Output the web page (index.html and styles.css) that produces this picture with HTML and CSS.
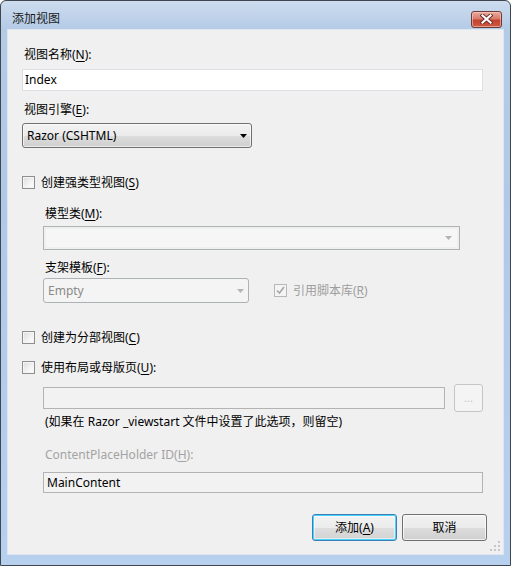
FILE: index.html
```html
<!DOCTYPE html>
<html lang="zh-CN">
<head>
<meta charset="utf-8">
<title>添加视图</title>
<link rel="stylesheet" href="styles.css">
</head>
<body>
<div class="window">
  <div class="titlebar">
    <span class="title">添加视图</span>
    <div class="close-btn">
      <svg width="13" height="10" viewBox="0 0 13 10">
        <path d="M2.5 1.5 L10.5 8.5 M10.5 1.5 L2.5 8.5" stroke="#6b2a22" stroke-width="4" stroke-linecap="square" fill="none"/>
        <path d="M2.5 1.5 L10.5 8.5 M10.5 1.5 L2.5 8.5" stroke="#ffffff" stroke-width="2.2" stroke-linecap="square" fill="none"/>
      </svg>
    </div>
  </div>
  <div class="client">
    <div class="label lbl-name">视图名称(<u>N</u>):</div>
    <div class="textbox tb-name">Index</div>

    <div class="label lbl-engine">视图引擎(<u>E</u>):</div>
    <div class="dropdown dd-engine">
      <span>Razor (CSHTML)</span>
      <svg class="arrow" width="7" height="4" viewBox="0 0 7 4"><path d="M0 0 H7 L3.5 4 Z" fill="#000"/></svg>
    </div>

    <div class="check chk-typed"><span class="box"></span><span>创建强类型视图(<u>S</u>)</span></div>

    <div class="indent">
      <div class="label lbl-model">模型类(<u>M</u>):</div>
      <div class="combo-disabled">
        <span class="combo-text"></span>
        <span class="combo-btn"><svg width="7" height="4" viewBox="0 0 7 4"><path d="M0 0 H7 L3.5 4 Z" fill="#b4b4b4"/></svg></span>
      </div>

      <div class="label lbl-scaffold">支架模板(<u>F</u>):</div>
      <div class="scaffold-row">
        <div class="dropdown dd-empty disabled">
          <span>Empty</span>
          <svg class="arrow" width="7" height="4" viewBox="0 0 7 4"><path d="M0 0 H7 L3.5 4 Z" fill="#b4b4b4"/></svg>
        </div>
        <div class="check disabled">
          <span class="box checked">
            <svg width="9" height="9" viewBox="0 0 9 9"><path d="M1 4.5 L3.5 7 L8 1" stroke="#a6a6a6" stroke-width="1.6" fill="none"/></svg>
          </span>
          <span>引用脚本库(<u>R</u>)</span>
        </div>
      </div>
    </div>

    <div class="check chk-partial"><span class="box"></span><span>创建为分部视图(<u>C</u>)</span></div>
    <div class="check chk-layout"><span class="box"></span><span>使用布局或母版页(<u>U</u>):</span></div>

    <div class="indent">
      <div class="layout-row">
        <div class="textbox tb-layout disabled"></div>
        <div class="browse-btn">...</div>
      </div>
      <div class="label note">(如果在 Razor _viewstart 文件中设置了此选项，则留空)</div>
      <div class="label lbl-cph disabled-text">ContentPlaceHolder ID(<u>H</u>):</div>
      <div class="textbox tb-cph disabled">MainContent</div>
    </div>

    <div class="buttons">
      <div class="btn btn-default">添加(<u>A</u>)</div>
      <div class="btn">取消</div>
    </div>

    <svg class="grip" width="11" height="11" viewBox="0 0 11 11">
      <rect x="8" y="0" width="2" height="2" fill="#c3c7cc"/>
      <rect x="4" y="4" width="2" height="2" fill="#c3c7cc"/>
      <rect x="8" y="4" width="2" height="2" fill="#c3c7cc"/>
      <rect x="0" y="8" width="2" height="2" fill="#c3c7cc"/>
      <rect x="4" y="8" width="2" height="2" fill="#c3c7cc"/>
      <rect x="8" y="8" width="2" height="2" fill="#c3c7cc"/>
    </svg>
  </div>
</div>
</body>
</html>
```
FILE: styles.css
```css
* { box-sizing: border-box; }
html, body { margin: 0; padding: 0; }
body {
  width: 511px;
  height: 566px;
  overflow: hidden;
  background: #ffffff;
  font-family: "Noto Sans", "Noto Sans CJK SC", sans-serif;
  font-size: 12px;
  color: #000;
}
u { text-decoration: underline; text-underline-offset: 2px; }

.window {
  width: 511px;
  height: 566px;
  border: 1px solid #3e4650;
  border-radius: 6px 6px 0 0;
  background: linear-gradient(to bottom, #cddcee 0px, #b4cbe6 28px, #b0c9e6 200px, #b6d0ee 566px);
  display: flex;
  flex-direction: column;
  padding: 0 6px 10px 6px;
}

.titlebar {
  height: 28px;
  flex: none;
  display: flex;
  align-items: center;
  justify-content: space-between;
  padding: 8px 2px 0 5px;
}
.title {
  font-size: 12px;
  color: #1a1a1a;
  line-height: 16px;
}
.close-btn {
  width: 31px;
  height: 17px;
  border: 1px solid #6e3a35;
  border-radius: 3px;
  background: linear-gradient(to bottom, #e9ab9f 0%, #d97b6b 45%, #c4432f 55%, #cc5a44 100%);
  box-shadow: inset 0 0 0 1px rgba(255, 210, 200, 0.55);
  display: flex;
  align-items: center;
  justify-content: center;
}

.client {
  position: relative;
  flex: 1;
  background: #f0f0f0;
  border: 1px solid #dde6f1;
  padding: 17px 0 0 14px;
  display: flex;
  flex-direction: column;
  align-items: flex-start;
}

.label {
  height: 16px;
  line-height: 16px;
  padding-left: 2px;
  white-space: nowrap;
}
.disabled-text { color: #a3a3a3; }

.textbox {
  height: 22px;
  line-height: 20px;
  border: 1px solid #dcdfe3;
  background: #fff;
  padding-left: 2px;
}
.textbox.disabled {
  background: #f2f2f2;
  border-color: #b3b3b3;
}

.tb-name { width: 461px; margin-top: 6px; }
.lbl-engine { margin-top: 11px; }

.dropdown {
  height: 25px;
  border: 1px solid #707070;
  border-radius: 3px;
  background: linear-gradient(to bottom, #f2f2f2 0%, #ebebeb 50%, #dddddd 51%, #cfcfcf 100%);
  box-shadow: inset 0 0 0 1px rgba(255,255,255,0.6);
  display: flex;
  align-items: center;
  justify-content: space-between;
  padding: 0 4px 0 4px;
}
.dropdown.disabled {
  background: #f4f4f4;
  border-color: #adb2b5;
  box-shadow: none;
  color: #8a8a8a;
}
.dd-engine { width: 230px; margin-top: 5px; }

.check {
  height: 16px;
  display: flex;
  align-items: center;
  gap: 6px;
  white-space: nowrap;
}
.check .box {
  width: 13px;
  height: 13px;
  border: 1px solid #8e8f8f;
  background: linear-gradient(135deg, #dcdcdc 0%, #f4f4f4 60%, #ffffff 100%);
  box-shadow: inset 0 0 0 1px #f4f4f4;
  display: flex;
  align-items: center;
  justify-content: center;
}
.check.disabled { color: #9d9d9d; }
.check.disabled .box {
  border-color: #b8b8b8;
  background: #f4f4f4;
  box-shadow: none;
}
.chk-typed { margin-top: 26px; }

.indent {
  margin-left: 21px;
  display: flex;
  flex-direction: column;
  align-items: flex-start;
}
.lbl-model { margin-top: 16px; }

.combo-disabled {
  width: 417px;
  height: 24px;
  margin-top: 4px;
  border: 1px solid #adb2b5;
  background: #efefef;
  display: flex;
  padding: 2px;
}
.combo-text {
  flex: 1;
  background: #f6f6f6;
}
.combo-btn {
  width: 17px;
  display: flex;
  align-items: center;
  justify-content: center;
  background: #f6f6f6;
}

.lbl-scaffold { margin-top: 10px; }
.scaffold-row {
  margin-top: 2px;
  display: flex;
  align-items: center;
  gap: 25px;
}
.dd-empty { width: 206px; }
.scaffold-row .check { margin-top: -1px; }

.chk-partial { margin-top: 26px; }
.chk-layout { margin-top: 14px; }

.layout-row {
  margin-top: 9px;
  display: flex;
  align-items: center;
  gap: 9px;
}
.tb-layout { width: 402px; }
.browse-btn {
  width: 29px;
  height: 28px;
  border: 1px solid #c2c6c9;
  border-radius: 3px;
  background: #f4f4f4;
  color: #c4c4c4;
  display: flex;
  align-items: center;
  justify-content: center;
  font-size: 11px;
  line-height: 1;
  padding-bottom: 2px;
}
.note { margin-top: 2px; }
.lbl-cph { margin-top: 17px; }
.tb-cph { width: 440px; margin-top: 9px; height: 21px; line-height: 19px; border-color: #a9a9a9; padding-left: 3px; }

.buttons {
  margin-top: 21px;
  margin-left: 290px;
  display: flex;
  gap: 5px;
}
.btn {
  width: 85px;
  height: 27px;
  border: 1px solid #707070;
  border-radius: 3px;
  background: linear-gradient(to bottom, #f2f2f2 0%, #ebebeb 50%, #dddddd 51%, #cfcfcf 100%);
  box-shadow: inset 0 0 0 1px rgba(255,255,255,0.7);
  display: flex;
  align-items: center;
  justify-content: center;
  line-height: 16px;
}
.btn-default {
  border-color: #3c7fb1;
  background: linear-gradient(to bottom, #eaf6fd 0%, #d9f0fc 50%, #bee6fd 51%, #a7d9f5 100%);
  box-shadow: inset 0 0 0 1px #48d3fe, inset 0 0 0 2px rgba(255,255,255,0.5);
  background: linear-gradient(to bottom, #f3f3f3 0%, #ececec 50%, #dedede 51%, #d2d2d2 100%);
}

.grip {
  position: absolute;
  right: 2px;
  bottom: 2px;
}
```
